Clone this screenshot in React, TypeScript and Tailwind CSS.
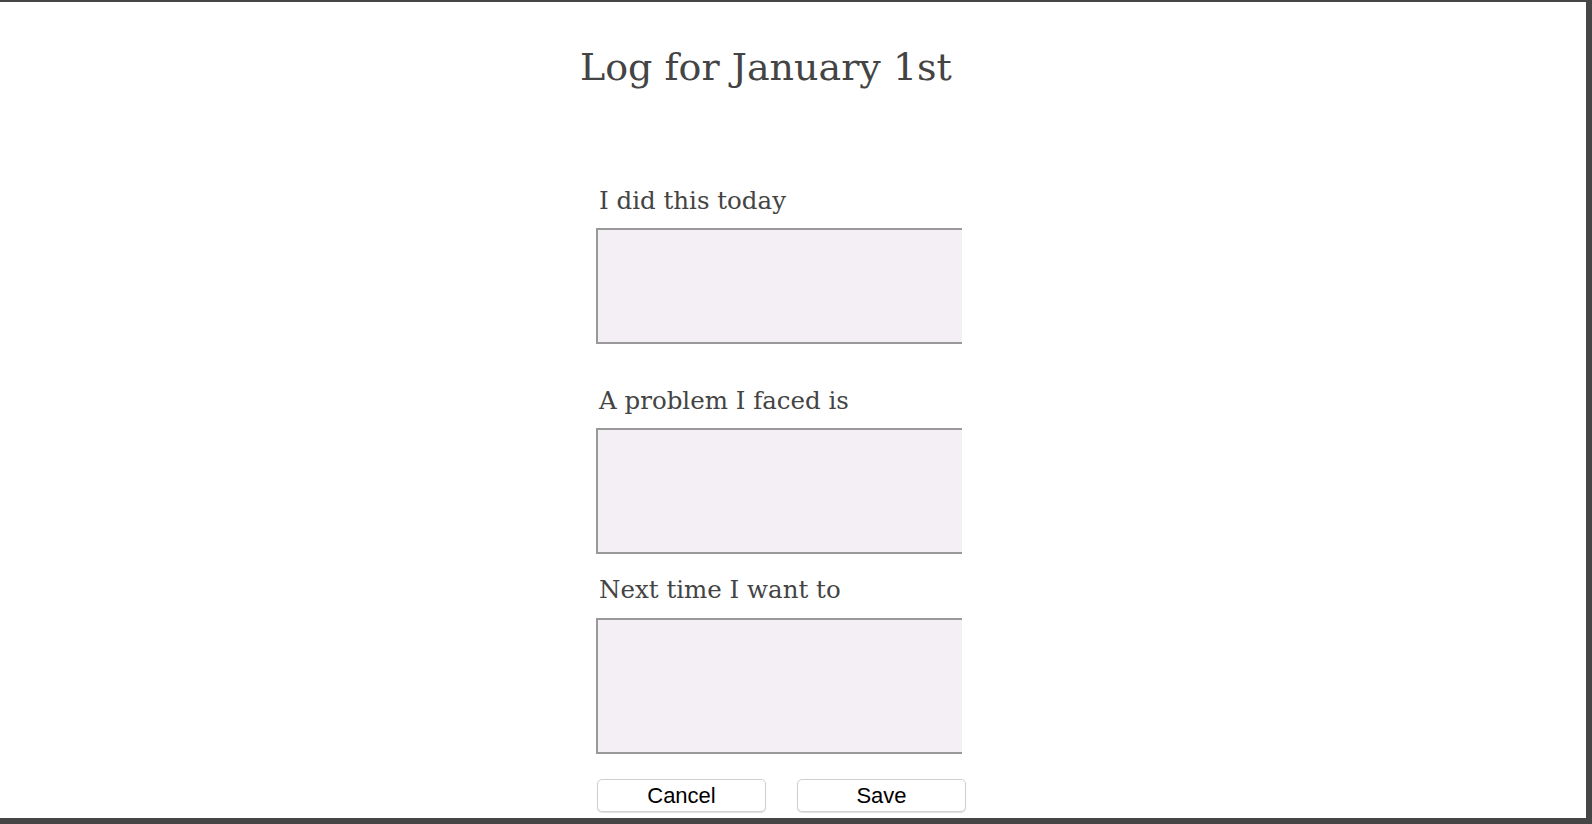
import React from 'react';

const serif = { fontFamily: '"DejaVu Serif", Georgia, serif' };
const sans = { fontFamily: '"Liberation Sans", Arial, sans-serif' };

const Field = ({ label, className, boxClass }: { label: string; className?: string; boxClass: string }) => (
  <div className={className}>
    <label className="block pl-[3px] text-[24.5px] leading-[30px] text-[#444444]" style={serif}>
      {label}
    </label>
    <textarea
      className={`block w-[366px] resize-none border-2 border-r-0 border-[#999999] bg-[#f3eff5] outline-none ${boxClass}`}
    />
  </div>
);

export default function App() {
  return (
    <div className="box-border h-[824px] w-full overflow-hidden border-t-2 border-r-[6px] border-b-[6px] border-[#464646] bg-white">
      {/* Title */}
      <h1
        className="ml-[580px] pt-[42px] text-[38px] leading-[46px] font-normal text-[#444444]"
        style={serif}
      >
        Log for January 1st
      </h1>

      {/* Form */}
      <form className="ml-[596px] flex w-[372px] flex-col">
        <Field label="I did this today" className="mt-[96px]" boxClass="mt-[12px] h-[116px]" />
        <Field label="A problem I faced is" className="mt-[42px]" boxClass="mt-[12px] h-[126px]" />
        <Field label="Next time I want to" className="mt-[21px]" boxClass="mt-[13px] h-[136px]" />

        <div className="mt-[25px] flex gap-[31px] pl-px">
          <button
            type="button"
            className="h-[33px] w-[169px] rounded-[5px] border border-[#cfcfcf] bg-white text-[22px] leading-none text-black shadow-[0_1px_1px_rgba(0,0,0,0.12)]"
            style={sans}
          >
            Cancel
          </button>
          <button
            type="button"
            className="h-[33px] w-[169px] rounded-[5px] border border-[#cfcfcf] bg-white text-[22px] leading-none text-black shadow-[0_1px_1px_rgba(0,0,0,0.12)]"
            style={sans}
          >
            Save
          </button>
        </div>
      </form>
    </div>
  );
}
